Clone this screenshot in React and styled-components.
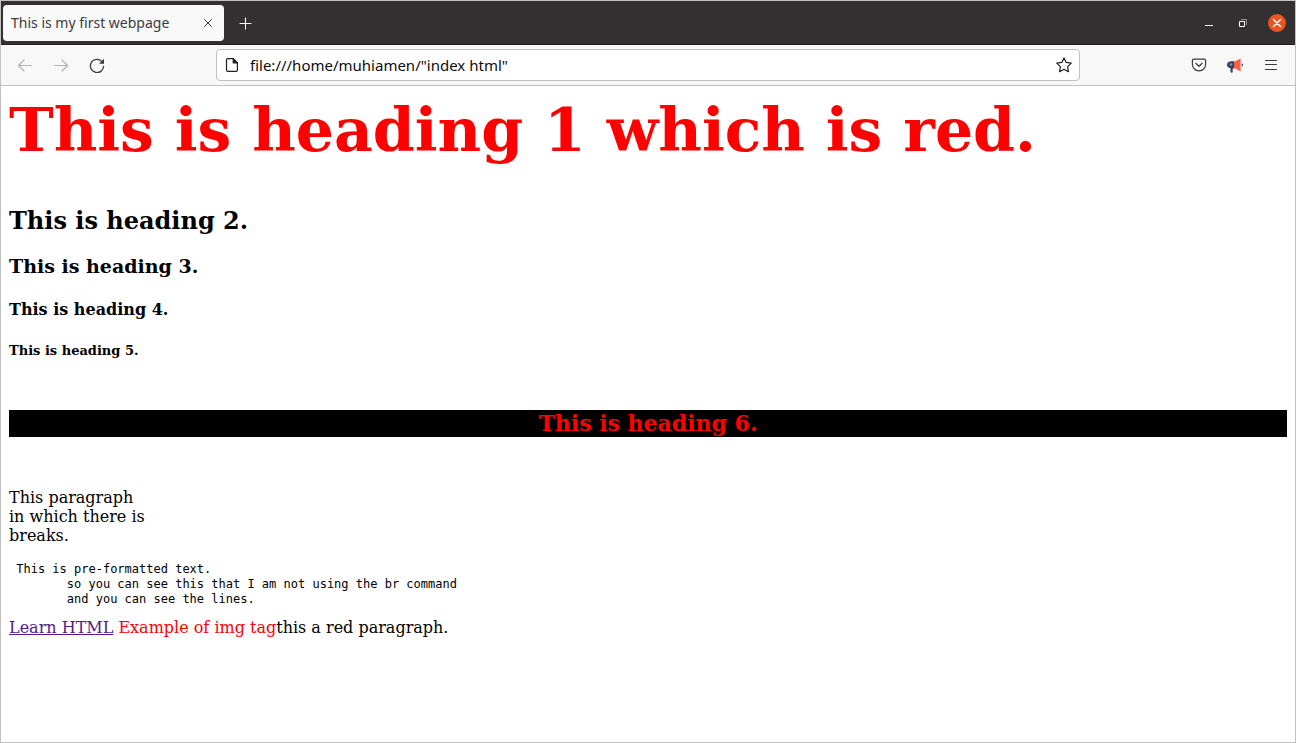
import React from "react";
import styled, { createGlobalStyle } from "styled-components";

const GlobalStyle = createGlobalStyle`
  *, *::before, *::after { box-sizing: border-box; }
  body { margin: 0; background: #fff; }
`;

const uiFont = `"Noto Sans", "Open Sans", sans-serif`;

const Window = styled.div`
  min-height: 100vh;
  display: flex;
  flex-direction: column;
  border: 1px solid #c2c2c2;
  background: #fff;
`;

const TabBar = styled.header`
  height: 44px;
  flex: none;
  display: flex;
  align-items: center;
  padding: 0 9px 0 2px;
  background: #333031;
  border-bottom: 1px solid #232122;
`;

const Tab = styled.div`
  width: 221px;
  height: 36px;
  display: flex;
  align-items: center;
  justify-content: space-between;
  padding: 0 6px 0 8px;
  border-radius: 4px;
  background: #f9f9fa;
  color: #3d3b40;
  font: 14px/20px ${uiFont};
  white-space: nowrap;
`;

const IconButton = styled.button`
  width: ${(p) => p.$size || 36}px;
  height: ${(p) => p.$size || 36}px;
  flex: none;
  display: flex;
  align-items: center;
  justify-content: center;
  padding: 0;
  border: 0;
  background: none;
  color: ${(p) => p.$color || "#3b3b3f"};

  svg { display: block; }
`;

const NewTab = styled(IconButton)`
  margin-left: 4px;
`;

const WindowControls = styled.div`
  margin-left: auto;
  display: flex;
  align-items: center;
  gap: 16px;
`;

const CloseWindow = styled(IconButton)`
  border-radius: 50%;
  background: #e95420;
`;

const Toolbar = styled.nav`
  height: 41px;
  flex: none;
  display: flex;
  align-items: center;
  padding: 0 6px;
  background: #f8f8f8;
  border-bottom: 1px solid #c2c2c2;
`;

const ButtonGroup = styled.div`
  flex: 1;
  display: flex;
  justify-content: ${(p) => p.$align || "flex-start"};
`;

const AddressBar = styled.label`
  flex: 0 1 864px;
  height: 32px;
  display: flex;
  align-items: center;
  gap: 10px;
  padding: 0 7px;
  border: 1px solid #c0c0c2;
  border-radius: 4px;
  background: #fff;
  color: #1f1f23;

  > svg { flex: none; }
`;

const AddressInput = styled.input`
  flex: 1;
  min-width: 0;
  height: 28px;
  padding: 0;
  border: 0;
  outline: 0;
  background: none;
  color: #0c0c0d;
  font: 15px/20px ${uiFont};
`;

const Page = styled.main`
  flex: 1;
  padding: 9px 8px;
  color: #000;
  font: 16px/19px "DejaVu Serif", serif;
`;

const Heading = styled.h1`
  margin: 0 0 ${(p) => p.$gap}px;
  font-size: ${(p) => p.$size}px;
  line-height: ${(p) => p.$line}px;
  font-weight: bold;
  color: ${(p) => (p.$red ? "#f00" : "inherit")};
`;

const Banner = styled(Heading)`
  background: #000;
  text-align: center;
`;

const Paragraph = styled.p`
  margin: 0;
`;

const Preformatted = styled.pre`
  margin: 17px 0 11px;
  font: 12px/15px "DejaVu Sans Mono", monospace;
`;

const VisitedLink = styled.a`
  color: #551a8b;
`;

const RedText = styled.span`
  color: #f00;
`;

const Icon = ({ size = 16, children, width = 1.3 }) => (
  <svg width={size} height={size} viewBox={`0 0 ${size} ${size}`} fill="none" stroke="currentColor"
    strokeWidth={width} strokeLinecap="round" strokeLinejoin="round" aria-hidden="true">
    {children}
  </svg>
);

const preText = ` This is pre-formatted text.
        so you can see this that I am not using the br command
        and you can see the lines.`;

export default function App() {
  return (
    <>
      <GlobalStyle />
      <Window>
        <TabBar>
          <Tab>
            <span>This is my first webpage</span>
            <IconButton $size={20} aria-label="Close tab">
              <Icon width={1}><path d="M4.5 4.5l7 7M11.5 4.5l-7 7" /></Icon>
            </IconButton>
          </Tab>
          <NewTab $color="#fbfbfe" aria-label="New tab">
            <Icon width={1.1}><path d="M7.500 3v11M2 8.500h11" /></Icon>
          </NewTab>
          <WindowControls>
            <IconButton $size={18} $color="#fff" aria-label="Minimize">
              <svg width="16" height="16" aria-hidden="true"><path d="M4 10h8v1H4z" fill="#fff" /></svg>
            </IconButton>
            <IconButton $size={18} $color="#fff" aria-label="Restore">
              <svg width="16" height="16" fill="none" aria-hidden="true">
                <path d="M6 4.500h5.500v5.500" stroke="#969495" />
                <path d="M4.500 6.500h5v5h-5z" stroke="#fff" />
              </svg>
            </IconButton>
            <CloseWindow $size={18} $color="#fff" aria-label="Close window">
              <Icon width={1.5}><path d="M4.500 4.500l7 7M11.500 4.500l-7 7" /></Icon>
            </CloseWindow>
          </WindowControls>
        </TabBar>

        <Toolbar>
          <ButtonGroup>
            <IconButton $color="#b3b3b5" aria-label="Back">
              <Icon width={1.2}><path d="M14.500 8.500H1.500M7 3L1.500 8.500L7 14" /></Icon>
            </IconButton>
            <IconButton $color="#b3b3b5" aria-label="Forward">
              <Icon width={1.2}><path d="M1.500 8.500h13M9 3L14.500 8.500L9 14" /></Icon>
            </IconButton>
            <IconButton aria-label="Reload">
              <Icon width={1.3}>
                <path d="M14.600 9.300A6.600 6.600 0 1 1 12.800 4.400" />
                <path d="M15 1.800v5H10z" fill="currentColor" stroke="none" />
              </Icon>
            </IconButton>
          </ButtonGroup>
          <AddressBar>
            <Icon width={1.2}>
              <path d="M3.700 1.600H9.200L13.400 5.800V13q0 1.400-1.400 1.400H3.900q-1.400 0-1.400-1.400V3Q2.500 1.600 3.700 1.600z" />
              <path d="M9.200 1.600V5.800h4.200z" fill="currentColor" />
            </Icon>
            <AddressInput aria-label="Address" defaultValue={'file:///home/muhiamen/"index html"'} />
            <Icon width={1.2}>
              <path d="M8 .9l2.200 4.500 5.100.7-3.700 3.500.9 5.100L8 12.300l-4.500 2.400.9-5.100L.7 6.100l5.100-.7z" />
            </Icon>
          </AddressBar>
          <ButtonGroup $align="flex-end">
            <IconButton aria-label="Save to Pocket">
              <Icon width={1.2}>
                <path d="M2.700 2.200h10.600q1.300 0 1.300 1.300V7.500a6.600 6.300 0 0 1-13.200 0V3.500q0-1.300 1.300-1.300z" />
                <path d="M4.800 6.300L8 9.300l3.200-3" />
              </Icon>
            </IconButton>
            <IconButton aria-label="Announcements">
              <svg width="16" height="16" viewBox="0 0 16 16" aria-hidden="true">
                <path d="M3.800 4.200H7v7.200H5.700v3.800q-1 .9-2.200 0v-4Q0 10.500 0 7.700T3.800 4.200z" fill="#2d4462" />
                <circle cx="4" cy="7.600" r="1.400" fill="#7d8fa5" />
                <path d="M7 4.700L13.700 1.500v13L7 11z" fill="#ff6044" />
                <path d="M13.700 1h1v14h-1z" fill="#dcdce0" />
                <path d="M14.700 6.500q1.300 0 1.300 1.400t-1.300 1.400z" fill="#2d4462" />
              </svg>
            </IconButton>
            <IconButton aria-label="Open menu">
              <Icon width={1}><path d="M2.500 3.500h11M2.500 7.500h11M2.500 12.500h11" /></Icon>
            </IconButton>
          </ButtonGroup>
        </Toolbar>

        <Page>
          <Heading $size={60} $line={70} $gap={42} $red>This is heading 1 which is red.</Heading>
          <Heading as="h2" $size={24} $line={28} $gap={20}>This is heading 2.</Heading>
          <Heading as="h3" $size={19} $line={22} $gap={23}>This is heading 3.</Heading>
          <Heading as="h4" $size={16} $line={19} $gap={24}>This is heading 4.</Heading>
          <Heading as="h5" $size={13} $line={16} $gap={51}>This is heading 5.</Heading>
          <Banner as="h6" $size={22} $line={27} $gap={51} $red>This is heading 6.</Banner>
          <Paragraph>
            This paragraph<br />in which there is<br />breaks.
          </Paragraph>
          <Preformatted>{preText}</Preformatted>
          <Paragraph>
            <VisitedLink href="#learn-html">Learn HTML</VisitedLink>{" "}
            <RedText>Example of img tag</RedText>this a red paragraph.
          </Paragraph>
        </Page>
      </Window>
    </>
  );
}
